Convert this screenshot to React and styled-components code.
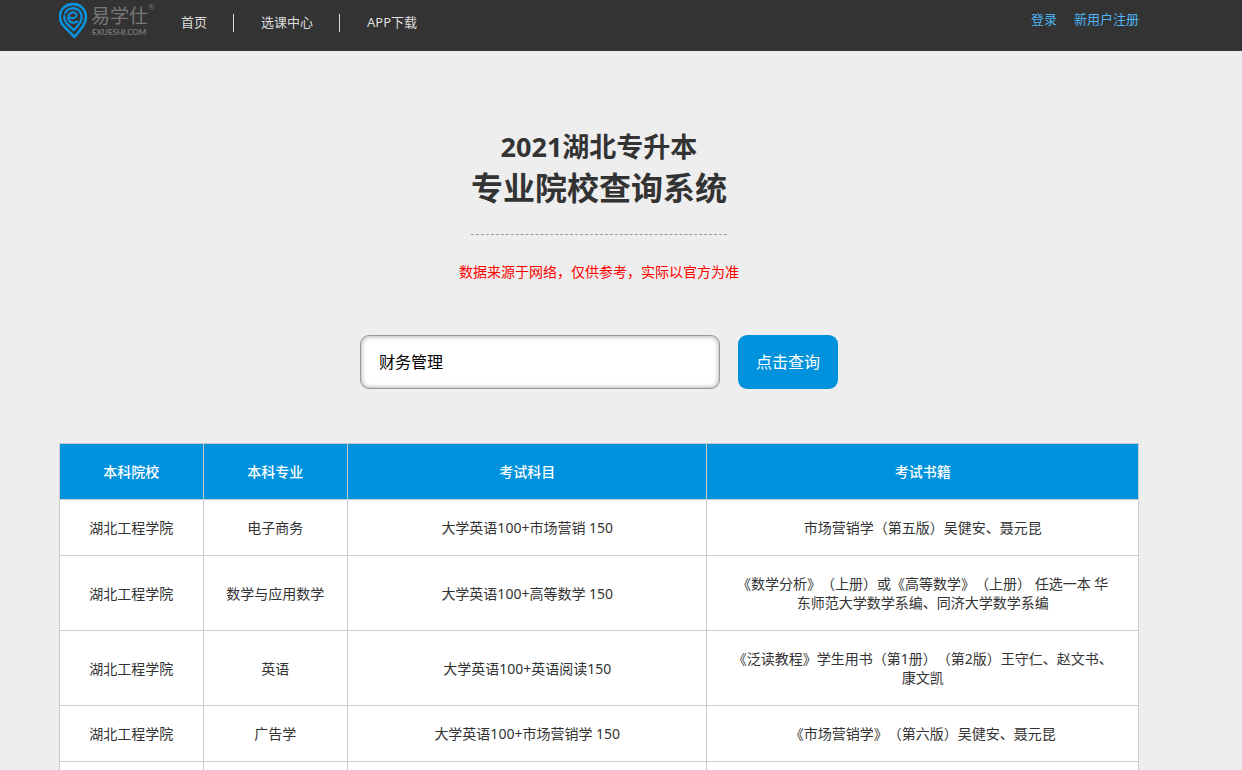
import React, { useState } from 'react'
import styled, { createGlobalStyle } from 'styled-components'

const GlobalStyle = createGlobalStyle`
    * {
        box-sizing:border-box;
    }

    body {
        margin:0;
        background:#eee;
        color:#333;
        font-family:"Noto Sans", "Noto Sans CJK SC", sans-serif;
        font-size:14px;
        line-height:19px;
        text-spacing-trim:space-all;
    }
`

const Header = styled.header`
    background:#333;
    padding:0 44px 0 0;
`

const Container = styled.div`
    width:92%;
    max-width:1080px;
    margin:0 auto;
`

const HeaderInner = styled(Container)`
    height:51px;
    display:flex;
    align-items:flex-start;
`

const LogoLink = styled.a`
    display:block;
    width:96px;
    height:42px;

    svg {
        display:block;
    }
`

const Nav = styled.nav`
    display:flex;
    flex:1;
    padding-top:14px;
`

const NavItem = styled.a`
    padding:0 26px;
    height:18px;
    line-height:17px;
    font-size:13px;
    color:#ddd;
    text-decoration:none;

    & + & {
        padding-left:27px;
        border-left:1px solid #ddd;
    }
`

const UserLinks = styled.div`
    display:flex;
    gap:17px;
    padding-top:10px;
`

const UserLink = styled.a`
    font-size:13px;
    line-height:18px;
    color:#4db5f5;
    text-decoration:none;
`

const Main = styled.main`
    padding:75px 44px 0 0;
`

const Intro = styled.section`
    display:flex;
    flex-direction:column;
    align-items:center;
    text-align:center;
`

const Title = styled.h1`
    margin:0;
    padding-bottom:26px;
    border-bottom:1px dashed #999;
    font-size:32px;
    line-height:41px;
    font-weight:700;
`

const TitleSmall = styled.span`
    display:block;
    font-size:27px;
`

const Notice = styled.p`
    margin:27px 0 0;
    color:#f00;
`

const SearchForm = styled.form`
    display:flex;
    justify-content:center;
    gap:18px;
    margin:54px 0;
`

const SearchInput = styled.input`
    width:360px;
    height:54px;
    padding:0 18px 2px;
    border:1px solid #999;
    border-radius:9px;
    background:#fff;
    box-shadow:inset 0 0 5px rgba(0,0,0,0.4);
    color:#000;
    font-family:inherit;
    font-size:16px;
    outline:none;
`

const SearchButton = styled.button`
    height:54px;
    padding:0 18px 2px;
    border:0;
    border-radius:9px;
    background:#0092dc;
    color:#fff;
    font-family:inherit;
    font-size:16px;
    cursor:pointer;
`

const Table = styled.table`
    width:100%;
    table-layout:fixed;
    border-collapse:collapse;
    background:#fff;
    text-align:center;
`

const Col = styled.col`
    width:${props => props.$share}%;
`

const HeadCell = styled.th`
    padding:18px 24px;
    border:1px solid #ccc;
    background:#0092dc;
    color:#fff;
    font-weight:500;
`

const Cell = styled.td`
    height:56px;
    padding:18px 24px;
    border:1px solid #ccc;

    &:nth-child(2) {
        padding:18px 12px;
    }
`

const columns = [
    { title: '本科院校', share: 13.3 },
    { title: '本科专业', share: 13.4 },
    { title: '考试科目', share: 33.3 },
    { title: '考试书籍', share: 40 },
]

const rows = [
    ['湖北工程学院', '电子商务', '大学英语100+市场营销 150', '市场营销学（第五版）吴健安、聂元昆'],
    ['湖北工程学院', '数学与应用数学', '大学英语100+高等数学 150', '《数学分析》（上册）或《高等数学》（上册） 任选一本 华东师范大学数学系编、同济大学数学系编'],
    ['湖北工程学院', '英语', '大学英语100+英语阅读150', '《泛读教程》学生用书（第1册）（第2版）王守仁、赵文书、康文凯'],
    ['湖北工程学院', '广告学', '大学英语100+市场营销学 150', '《市场营销学》（第六版）吴健安、聂元昆'],
    ['', '', '', ''],
]

function Logo() {
    return (
        <svg width="96" height="42" viewBox="0 0 96 42" role="img" aria-label="易学仕">
            <g fill="none" stroke="#0a93dc" strokeLinecap="round" strokeLinejoin="round">
                <path strokeWidth="2.6" d="M15.4 37 L4.8 26.2 C-0.6 20 -0.2 11.2 5.4 7 C10.6 3 18.6 3.2 23.2 7.6 C28 12.4 28 20.4 24 26 C21.6 29.6 18.6 33.4 15.4 37 L13 34.6" />
                <path strokeWidth="2.3" d="M6.2 13 C8.2 8.8 13.4 7.2 17.6 9 C22.4 11.2 24 16.8 21.6 21.6 C20 24.8 17.4 27.6 14.8 30.2 L8.2 23.8 C6 21.4 5 18.8 5.4 16" />
                <path strokeWidth="2.1" d="M11.2 17.6 C13 18.6 16.6 18.2 17.4 16.2 C18.2 13.8 15.6 11.8 13 12.4 C9.6 13.2 8.4 17 9.8 20 C11.2 23 15.6 23.6 18.2 21.4" />
            </g>
            <text x="32" y="23" fontSize="19" fill="#777" fontFamily="'Noto Sans CJK SC', sans-serif">易学仕</text>
            <text x="33" y="35" fontSize="8" fontWeight="700" fill="#777" fontFamily="Lato, sans-serif">EXUESHI.COM</text>
            <text x="89" y="10" fontSize="8" fill="#777" fontFamily="Lato, sans-serif">®</text>
        </svg>
    )
}

function App() {
    const [keyword, setKeyword] = useState('财务管理')

    return (
        <>
            <GlobalStyle />
            <Header>
                <HeaderInner>
                    <LogoLink href="#"><Logo /></LogoLink>
                    <Nav>
                        <NavItem href="#">首页</NavItem>
                        <NavItem href="#">选课中心</NavItem>
                        <NavItem href="#">APP下载</NavItem>
                    </Nav>
                    <UserLinks>
                        <UserLink href="#">登录</UserLink>
                        <UserLink href="#">新用户注册</UserLink>
                    </UserLinks>
                </HeaderInner>
            </Header>
            <Main>
                <Container>
                    <Intro>
                        <Title><TitleSmall>2021湖北专升本</TitleSmall>专业院校查询系统</Title>
                        <Notice>数据来源于网络，仅供参考，实际以官方为准</Notice>
                    </Intro>
                    <SearchForm onSubmit={e => e.preventDefault()}>
                        <SearchInput
                            type="text"
                            aria-label="专业"
                            value={keyword}
                            onChange={e => setKeyword(e.target.value)}
                        />
                        <SearchButton type="submit">点击查询</SearchButton>
                    </SearchForm>
                    <Table>
                        <colgroup>
                            {columns.map(col => <Col key={col.title} $share={col.share} />)}
                        </colgroup>
                        <thead>
                            <tr>
                                {columns.map(col => <HeadCell key={col.title} scope="col">{col.title}</HeadCell>)}
                            </tr>
                        </thead>
                        <tbody>
                            {rows.map((row, i) => (
                                <tr key={i}>
                                    {row.map((text, j) => <Cell key={j}>{text}</Cell>)}
                                </tr>
                            ))}
                        </tbody>
                    </Table>
                </Container>
            </Main>
        </>
    )
}

export default App
